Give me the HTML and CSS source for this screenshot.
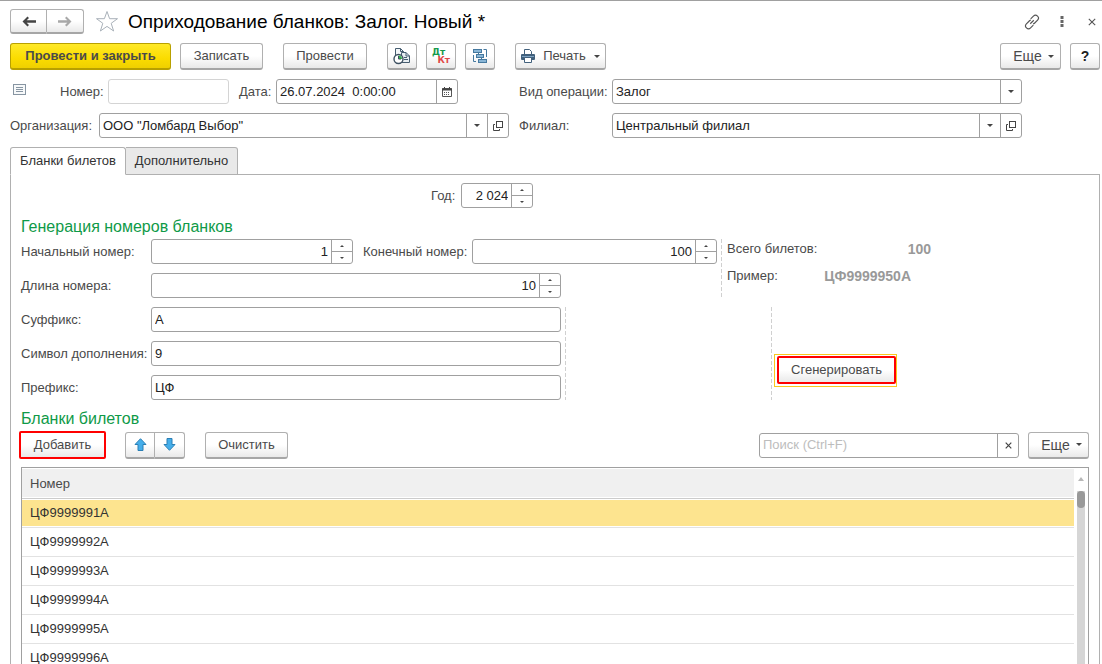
FILE: index.html
```html
<!DOCTYPE html>
<html lang="ru">
<head>
<meta charset="utf-8">
<title>Оприходование бланков: Залог. Новый *</title>
<meta name="viewport" content="width=device-width, initial-scale=1">
<link rel="stylesheet" href="styles.css">
</head>
<body>
<main class="window">
  <header class="titlebar">
    <div class="btn-group nav">
      <button class="btn" type="button" aria-label="Назад"><svg width="14" height="11" viewBox="0 0 14 11"><path d="M5.5 0.5 L0.5 5.5 L5.5 10.5 L7 9 L4.7 6.7 H14 V4.3 H4.7 L7 2 Z" fill="#444"/></svg></button>
      <button class="btn" type="button" aria-label="Вперед"><svg width="14" height="11" viewBox="0 0 14 11"><path d="M8.500 .5 L13.500 5.500 L8.500 10.500 L7 9 L9.300 6.700 H0 V4.300 H9.300 L7 2 Z" fill="#a8a8a8"/></svg></button>
    </div>
    <button class="icon-btn star" type="button" aria-label="Избранное"><svg width="24" height="23" viewBox="0 0 24 23"><path d="M12 1.500 L14.600 8.700 H22.500 L16.200 13.300 L18.600 21 L12 16.400 L5.400 21 L7.800 13.300 L1.500 8.700 H9.400 Z" fill="none" stroke="#a9b1b9" stroke-width="1"/></svg></button>
    <h1 class="title">Оприходование бланков: Залог. Новый *</h1>
    <div class="window-tools">
      <button class="icon-btn" type="button" aria-label="Ссылка"><svg width="16" height="16" viewBox="0 0 18 18" fill="none" stroke="#555" stroke-width="1.300"><path d="M7.500 5.500 L10.600 2.400 A3 3 0 0 1 15.300 6.900 L11.800 10.400 A3 3 0 0 1 10.200 11.200"/><path d="M10.500 12.500 L7.400 15.600 A3 3 0 0 1 2.700 11.100 L6.200 7.600 A3 3 0 0 1 7.800 6.800"/><path d="M7 11 L11 7"/></svg></button>
      <button class="icon-btn" type="button" aria-label="Меню"><svg width="4" height="12" viewBox="0 0 4 12" fill="#666"><rect x=".5" y="0" width="3" height="3"/><rect x=".5" y="4" width="3" height="3"/><rect x=".5" y="8" width="3" height="3"/></svg></button>
      <button class="icon-btn" type="button" aria-label="Закрыть"><svg width="8" height="8" viewBox="0 0 8 8"><path d="M.8 .8 L7.200 7.200 M7.200 .8 L.8 7.200" stroke="#555" stroke-width="1.100"/></svg></button>
    </div>
  </header>

  <div class="toolbar">
    <button class="btn primary" type="button">Провести и закрыть</button>
    <button class="btn medium" type="button">Записать</button>
    <button class="btn post spaced" type="button">Провести</button>
    <button class="btn square spaced" type="button" aria-label="Структура"><svg width="18" height="18" viewBox="0 0 18 18"><path d="M2.500 11 V1.500 H7.500 L10.500 4.500 V11" fill="#f4f7f9" stroke="#465d70"/><path d="M7.500 1.500 V4.500 H10.500" fill="none" stroke="#465d70"/><path d="M8.500 15.500 V5.500 H13 L16.500 9 V15.500 Z" fill="#e8eef2" stroke="#465d70"/><path d="M13 5.500 V9 H16.500 M11 10.500 H14 M11 12.500 H15" fill="none" stroke="#465d70"/><circle cx="5.500" cy="12" r="4.500" fill="#fff" stroke="#3d5061" stroke-width="1.400"/><path d="M5.500 12 V8.500 A3.500 3.500 0 0 1 9 12 Z" fill="#35b34a"/><path d="M5.500 9 V12 H8" fill="none" stroke="#3d5061"/></svg></button>
    <button class="btn square" type="button" aria-label="Движения документа"><span class="dtkt"><span class="dt">Дт</span><span class="kt">Кт</span></span></button>
    <button class="btn square" type="button" aria-label="Связанные документы"><svg width="16" height="16" viewBox="0 0 16 16"><g fill="#8ab6d6" stroke="#46799f"><rect x="1.500" y="1.500" width="8" height="3"/><rect x="4.500" y="6.500" width="7" height="3"/><rect x="6.500" y="11.500" width="8" height="3"/></g><path d="M11.500 1.500 H14.500 V9 M4 13.500 H1.500 V7 M6.500 5 V6 M9.500 10 V11" fill="none" stroke="#46799f"/></svg></button>
    <button class="btn print spaced" type="button"><svg width="14" height="14" viewBox="0 0 14 14"><path d="M3.500 5 V.5 H8.500 L10.500 2.500 V5" fill="#fff" stroke="#41607c"/><rect x="0" y="5" width="14" height="6" rx="1" fill="#41607c"/><path d="M1 7.500 H13" stroke="#7ea3c3"/><path d="M3.500 8.500 H10.500 V13.500 H3.500 Z" fill="#fff" stroke="#41607c"/></svg>Печать<span class="caret"></span></button>
    <div class="push">
      <button class="btn more" type="button">Еще<span class="caret"></span></button>
      <button class="btn square help" type="button">?</button>
    </div>
  </div>

  <form class="head-form">
    <div class="line">
      <span class="state"><svg width="13" height="11" viewBox="0 0 13 11"><rect x=".5" y=".5" width="12" height="10" fill="#f7f9fa" stroke="#8795a2"/><path d="M3 3.500 H10 M3 5.500 H10 M3 7.500 H10" stroke="#8795a2"/></svg></span>
      <label class="number-label" for="num">Номер:</label>
      <span class="field pale grow"><input id="num" type="text"></span>
      <label class="date-label" for="date">Дата:</label>
      <span class="field date"><input id="date" type="text" value="26.07.2024  0:00:00"><button class="part" type="button" aria-label="Календарь"><svg width="10" height="10" viewBox="0 0 10 10"><path d="M.5 1.500 H9.500 V9.500 H.5 Z" fill="none" stroke="#555"/><path d="M0 2.500 H10" stroke="#444" stroke-width="2"/><path d="M2.500 0 V2 M7.500 0 V2" stroke="#444"/><path d="M2 5.500 H8 M2 7.500 H8" stroke="#555" stroke-dasharray="1 1"/></svg></button></span>
    </div>
    <div class="line">
      <label class="kind-label" for="kind">Вид операции:</label>
      <span class="field grow"><select id="kind"><option>Залог</option></select><span class="part"><span class="caret small"></span></span></span>
    </div>
    <div class="line">
      <label class="org-label" for="org">Организация:</label>
      <span class="field grow"><input id="org" type="text" value="ООО &quot;Ломбард Выбор&quot;"><button class="part" type="button" aria-label="Выбрать"><span class="caret small"></span></button><button class="part" type="button" aria-label="Открыть"><svg width="10" height="10" viewBox="0 0 10 10" fill="none" stroke="#444"><rect x="3.500" y=".5" width="6" height="6"/><path d="M2 3.500 H.5 V9.500 H6.500 V8"/></svg></button></span>
    </div>
    <div class="line">
      <label class="kind-label" for="branch">Филиал:</label>
      <span class="field grow"><input id="branch" type="text" value="Центральный филиал"><button class="part" type="button" aria-label="Выбрать"><span class="caret small"></span></button><button class="part" type="button" aria-label="Открыть"><svg width="10" height="10" viewBox="0 0 10 10" fill="none" stroke="#444"><rect x="3.500" y=".5" width="6" height="6"/><path d="M2 3.500 H.5 V9.500 H6.500 V8"/></svg></button></span>
    </div>
  </form>

  <div class="tabs" role="tablist">
    <button class="tab active" type="button" role="tab" aria-selected="true">Бланки билетов</button>
    <button class="tab" type="button" role="tab" aria-selected="false">Дополнительно</button>
  </div>

  <section class="panel">
    <div class="year">
      <label for="year">Год:</label>
      <span class="field"><input id="year" class="num" type="text" value="2 024"><span class="spin"><button type="button" aria-label="Больше"><i class="up"></i></button><button type="button" aria-label="Меньше"><i class="down"></i></button></span></span>
    </div>

    <h2>Генерация номеров бланков</h2>
    <div class="upper">
      <div class="params">
        <div class="line">
          <label class="param-label" for="first">Начальный номер:</label>
          <span class="field first"><input id="first" class="num" type="text" value="1"><span class="spin"><button type="button" aria-label="Больше"><i class="up"></i></button><button type="button" aria-label="Меньше"><i class="down"></i></button></span></span>
          <label class="last-label" for="last">Конечный номер:</label>
          <span class="field last"><input id="last" class="num" type="text" value="100"><span class="spin"><button type="button" aria-label="Больше"><i class="up"></i></button><button type="button" aria-label="Меньше"><i class="down"></i></button></span></span>
        </div>
        <div class="line">
          <label class="param-label" for="len">Длина номера:</label>
          <span class="field wide"><input id="len" class="num" type="text" value="10"><span class="spin"><button type="button" aria-label="Больше"><i class="up"></i></button><button type="button" aria-label="Меньше"><i class="down"></i></button></span></span>
        </div>
      </div>
      <span class="dash"></span>
      <dl class="totals">
        <dt>Всего билетов:</dt><dd>100</dd>
        <dt>Пример:</dt><dd class="sample">ЦФ9999950А</dd>
      </dl>
    </div>
    <div class="lower">
      <div class="params">
        <div class="line"><label class="param-label" for="suf">Суффикс:</label><span class="field wide"><input id="suf" type="text" value="А"></span></div>
        <div class="line"><label class="param-label" for="fill">Символ дополнения:</label><span class="field wide"><input id="fill" type="text" value="9"></span></div>
        <div class="line"><label class="param-label" for="pre">Префикс:</label><span class="field wide"><input id="pre" type="text" value="ЦФ"></span></div>
      </div>
      <span class="dash"></span>
      <span class="dash second"></span>
      <div class="generate"><button class="btn marked" type="button">Сгенерировать</button></div>
    </div>

    <h2>Бланки билетов</h2>
    <div class="list-bar">
      <button class="btn marked add" type="button">Добавить</button>
      <div class="btn-group arrows">
        <button class="btn" type="button" aria-label="Вверх"><svg width="13" height="13" viewBox="0 0 13 13"><path d="M6.500 .7 L12 6.500 H9 V12.500 H4 V6.500 H1 Z" fill="#45aeea" stroke="#2b7fb5"/></svg></button>
        <button class="btn" type="button" aria-label="Вниз"><svg width="13" height="13" viewBox="0 0 13 13"><path d="M6.500 12.300 L12 6.500 H9 V.5 H4 V6.500 H1 Z" fill="#45aeea" stroke="#2b7fb5"/></svg></button>
      </div>
      <button class="btn medium" type="button">Очистить</button>
      <div class="push">
        <span class="field search"><input type="text" placeholder="Поиск (Ctrl+F)" aria-label="Поиск"><button class="part" type="button" aria-label="Очистить поиск"><svg width="7" height="7" viewBox="0 0 7 7"><path d="M.7 .7 L6.300 6.300 M6.300 .7 L.7 6.300" stroke="#444" stroke-width="1.200"/></svg></button></span>
        <button class="btn more" type="button">Еще<span class="caret"></span></button>
      </div>
    </div>

    <div class="grid">
      <table>
        <thead><tr><th>Номер</th></tr></thead>
        <tbody>
          <tr class="selected"><td>ЦФ9999991А</td></tr>
          <tr><td>ЦФ9999992А</td></tr>
          <tr><td>ЦФ9999993А</td></tr>
          <tr><td>ЦФ9999994А</td></tr>
          <tr><td>ЦФ9999995А</td></tr>
          <tr><td>ЦФ9999996А</td></tr>
        </tbody>
      </table>
      <div class="scroll"><i class="scroll-up"></i><div class="track"><div class="thumb"></div></div></div>
    </div>
  </section>
</main>
</body>
</html>
```
FILE: styles.css
```css
* { box-sizing: border-box; }

body {
  margin: 0;
  background: #fff;
  color: #4a4a4a;
  font: 13px/16px "Liberation Sans", Arial, sans-serif;
}

button, input, select { font: inherit; color: inherit; margin: 0; }
button { cursor: pointer; }

.window {
  display: flex;
  flex-direction: column;
  height: 100vh;
  overflow: hidden;
  padding: 8px 2px 0 10px;
  border-top: 1px solid #a0a0a0;
}

/* Buttons */
.btn {
  display: inline-flex;
  align-items: center;
  justify-content: center;
  flex: none;
  height: 27px;
  padding: 0;
  border: 1px solid #b0b0b0;
  border-bottom: 2px solid #a6a6a6;
  border-radius: 3px;
  background: linear-gradient(#fff 50%, #e9e9e9);
  white-space: nowrap;
}
.btn.primary {
  width: 161px;
  border-color: #b8a000;
  background: linear-gradient(#ffe928, #fbdc00 60%, #efd000);
  font-weight: bold;
}
.btn.medium { width: 83px; }
.btn.post { width: 84px; }
.btn.square { width: 30px; }
.btn.spaced { margin-left: 11px; }
.btn.print { width: 91px; gap: 8px; }
.btn.more { width: 61px; padding-left: 6px; gap: 6px; font-size: 14px; }
.btn.help { color: #222; font-size: 14px; font-weight: bold; }

.btn-group { display: flex; }
.btn-group .btn:first-child { border-radius: 3px 0 0 3px; }
.btn-group .btn:last-child { border-radius: 0 3px 3px 0; border-left: 0; }

.icon-btn { display: flex; align-items: center; justify-content: center; padding: 0; border: 0; background: none; }
.push { display: flex; gap: 9px; margin-left: auto; }

.caret {
  border: 3px solid transparent;
  border-top-color: #444;
  border-bottom: 0;
}

/* Title */
.titlebar { display: flex; align-items: center; height: 25px; }
.nav .btn { width: 37px; height: 25px; }
.star { margin: 0 9px 0 11px; }
.title { margin: 0; color: #000; font-size: 19px; line-height: 22px; font-weight: normal; }
.window-tools { display: flex; align-items: center; gap: 14px; margin-left: auto; }
.window-tools .icon-btn { width: 16px; height: 16px; }

.toolbar { display: flex; gap: 9px; margin-top: 9px; }

.dtkt { display: flex; flex-direction: column; width: 18px; font: bold 9px/8px "DejaVu Sans", sans-serif; }
.dt { color: #169a4c; text-align: left; }
.kt { color: #e04848; text-align: right; }

/* Fields */
.line { display: flex; align-items: center; }
.field {
  display: flex;
  height: 25px;
  border: 1px solid #a0a0a0;
  border-radius: 3px;
  background: #fff;
  color: #222;
}
.field.pale { border-color: #d4d4d4; }
.grow { flex: 1; min-width: 0; }
.field input, .field select {
  flex: 1;
  width: 0;
  min-width: 0;
  padding: 0 3px;
  border: 0;
  outline: 0;
  background: none;
  appearance: none;
  white-space: pre;
}
.field .num { text-align: right; }
.field input::placeholder { color: #bdbdbd; }
.part {
  display: flex;
  align-items: center;
  justify-content: center;
  flex: none;
  width: 21px;
  padding: 0;
  border: 0;
  border-left: 1px solid #a0a0a0;
  background: none;
}
.spin { display: flex; flex-direction: column; flex: none; width: 21px; border-left: 1px solid #a0a0a0; }
.spin button {
  display: flex;
  align-items: center;
  justify-content: center;
  flex: 1;
  padding: 0;
  border: 0;
  background: none;
}
.spin button + button { border-top: 1px solid #a0a0a0; }
.up, .down { border: 2px solid transparent; }
.up { border-bottom-color: #444; border-top: 0; }
.down { border-top-color: #444; border-bottom: 0; }

.head-form {
  display: grid;
  grid-template-columns: 499fr 503fr;
  gap: 9px 10px;
  margin-top: 9px;
  padding-right: 78px;
}
.state { display: flex; width: 50px; padding: 0 0 4px 3px; }
.number-label { width: 48px; }
.date-label { width: 47px; padding-left: 10px; }
.date { width: 182px; margin-right: 51px; }
.kind-label { width: 93px; }
.org-label { width: 89px; }

/* Tabs */
.tabs { display: flex; flex: none; margin-top: 9px; }
.tab {
  height: 28px;
  width: 112px;
  margin-bottom: -1px;
  padding: 0;
  border: 1px solid #b0b0b0;
  border-left: 0;
  border-radius: 0 3px 0 0;
  background: #e9e9e9;
  color: #333;
}
.tab.active {
  z-index: 1;
  width: 116px;
  border-left: 1px solid #b0b0b0;
  border-bottom-color: #fff;
  border-radius: 3px 3px 0 0;
  background: #fff;
}

.panel {
  display: flex;
  flex-direction: column;
  flex: 1;
  min-height: 0;
  padding: 8px 10px 0;
  border: 1px solid #b0b0b0;
  border-bottom: 0;
}

.year { display: flex; align-items: center; gap: 6px; padding-left: 410px; }
.year .field { width: 72px; }

h2 { margin: 9px 0 2px; color: #0f9a48; font-size: 16px; line-height: 20px; font-weight: normal; }

.params { display: flex; flex-direction: column; gap: 9px; }
.param-label { width: 130px; white-space: nowrap; }
.first { width: 202px; }
.last-label { width: 119px; padding-left: 10px; white-space: nowrap; }
.last { width: 245px; }
.wide { width: 410px; }

.upper, .lower { display: flex; }
.lower { margin-top: 9px; }
.dash {
  flex: none;
  width: 1px;
  margin-left: 4px;
  background: repeating-linear-gradient(#d0d0d0 0 4px, transparent 4px 6px);
}
.dash.second { margin-left: 205px; }
.totals {
  display: grid;
  grid-template-columns: 84px 120px;
  align-content: start;
  gap: 11px 0;
  margin: 2px 0 0 5px;
}
.totals dt { white-space: nowrap; }
.totals dd { margin: 0; color: #999; font-size: 14px; font-weight: bold; text-align: right; }
.totals .sample { padding-right: 20px; }

.marked { border: 2px solid #f00; border-radius: 2px; }
.generate {
  display: flex;
  align-self: flex-start;
  margin: 47px 0 0 2px;
  padding: 1px 0 2px 2px;
  border: 1px solid #f9c81e;
}
.generate .btn { width: 119px; height: 28px; }

.list-bar { display: flex; align-items: center; }
.list-bar .push { align-items: center; }
.add { width: 87px; height: 28px; margin: 0 19px 0 -2px; }
.arrows { margin-right: 20px; }
.arrows .btn { width: 30px; }
.search { width: 260px; }

/* Table */
.grid {
  display: flex;
  flex: 1;
  min-height: 0;
  margin-top: 8px;
  overflow: hidden;
  border: 1px solid #a0a0a0;
  border-bottom: 0;
}
table { flex: 1; align-self: flex-start; border-collapse: separate; border-spacing: 0; }
th, td { padding: 0 8px; text-align: left; font-weight: normal; }
th { height: 31px; border-top: 1px solid #fff; border-bottom: 1px solid #ccc; background: #f0f0f0; box-shadow: inset 0 -1px #fff; }
td { height: 29px; border-bottom: 1px solid #e2e2e2; color: #333; }
.selected td { background: #fde48f; box-shadow: inset 0 1px #fff, inset 0 -1px #fff; }
.scroll { display: flex; flex-direction: column; align-items: center; width: 14px; padding-top: 9px; }
.scroll-up { border: 3px solid transparent; border-top: 0; border-bottom: 4px solid #b8b8b8; }
.track { flex: 1; width: 8px; margin-top: 10px; background: #d6d6d6; }
.thumb { height: 17px; border-radius: 4px; background: #999; }
```
